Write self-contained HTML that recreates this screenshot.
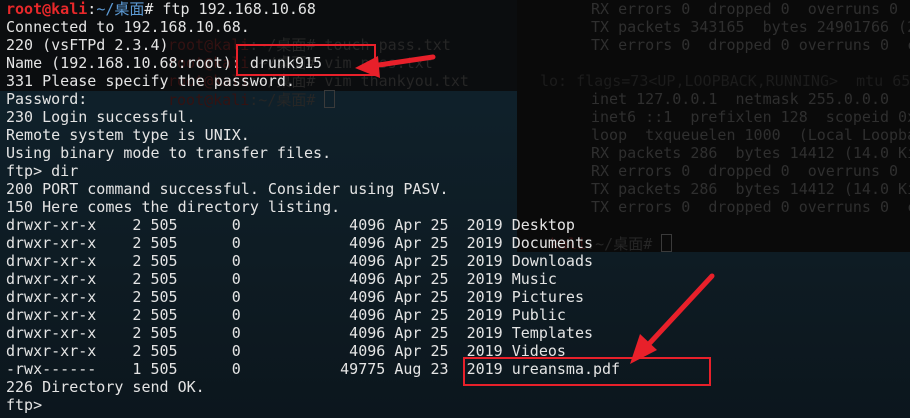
<!DOCTYPE html>
<html><head><meta charset="utf-8"><style>
body{margin:0;width:910px;height:418px;overflow:hidden;background:#0e1c25;position:relative;font-family:"DejaVu Sans Mono","Liberation Mono","Noto Sans CJK SC",monospace;font-size:15px;}
.bg{position:absolute;left:0;top:0;width:910px;height:418px;background:linear-gradient(180deg,#10232e 0%,#0e1c24 60%,#0c161d 100%);}
.b1{position:absolute;left:0;top:0;width:517px;height:91px;background:#0b0d0f;}
.b2{position:absolute;left:517px;top:0;width:393px;height:252px;background:#0a0a0a;}
pre{margin:0;font:inherit;line-height:18px;position:absolute;white-space:pre;overflow:hidden;}
.ghost{color:#2f2f2f;}
.g2{color:#262626;}
.main{left:6px;top:0;color:#e4e4e4;}
.r{color:#e8282a;font-weight:bold}
.bl{color:#5d9bd5}
.box{position:absolute;border:2px solid #e8202a;}
</style></head><body>
<div class="bg"></div><div class="b1"></div><div class="b2"></div>
<pre class="ghost" style="left:591px;top:0;width:319px">RX errors 0  dropped 0  overruns 0  frame 0
TX packets 343165  bytes 24901766 (23.7 MiB)
TX errors 0  dropped 0 overruns 0  carrier 0</pre>
<pre style="left:540px;top:72px;width:370px;color:#1c1c1c">lo: flags=73&lt;UP,LOOPBACK,RUNNING&gt;  mtu 65536</pre>
<pre class="ghost" style="left:591px;top:90px;width:319px">inet 127.0.0.1  netmask 255.0.0.0
inet6 ::1  prefixlen 128  scopeid 0x10&lt;host&gt;
loop  txqueuelen 1000  (Local Loopback)
RX packets 286  bytes 14412 (14.0 KiB)
RX errors 0  dropped 0  overruns 0  frame 0
TX packets 286  bytes 14412 (14.0 KiB)
TX errors 0  dropped 0 overruns 0  carrier 0</pre>
<pre class="g2" style="left:550px;top:234px;width:200px"><span style="color:#331212">kali</span>:~/桌面# <span style="display:inline-block;width:9px;height:16px;border:1px solid #3a3a3a;vertical-align:-3px"></span></pre>
<pre class="g2" style="left:168px;top:36px;width:300px"><span style="color:#331212">root@kali</span>:~/桌面# touch pass.txt
<span style="color:#331212">root@kali</span>:~/桌面# vim pass.txt
<span style="color:#331212">root@kali</span>:~/桌面# vim thankyou.txt
<span style="color:#331212">root@kali</span>:~/桌面# <span style="display:inline-block;width:9px;height:16px;border:1px solid #3a3a3a;vertical-align:-3px"></span></pre>
<pre class="main"><span class="r">root@kali</span>:<span class="bl">~/桌面</span># ftp 192.168.10.68
Connected to 192.168.10.68.
220 (vsFTPd 2.3.4)
Name (192.168.10.68:root): drunk915
331 Please specify the password.
Password:
230 Login successful.
Remote system type is UNIX.
Using binary mode to transfer files.
ftp> dir
200 PORT command successful. Consider using PASV.
150 Here comes the directory listing.
drwxr-xr-x    2 505      0            4096 Apr 25  2019 Desktop
drwxr-xr-x    2 505      0            4096 Apr 25  2019 Documents
drwxr-xr-x    2 505      0            4096 Apr 25  2019 Downloads
drwxr-xr-x    2 505      0            4096 Apr 25  2019 Music
drwxr-xr-x    2 505      0            4096 Apr 25  2019 Pictures
drwxr-xr-x    2 505      0            4096 Apr 25  2019 Public
drwxr-xr-x    2 505      0            4096 Apr 25  2019 Templates
drwxr-xr-x    2 505      0            4096 Apr 25  2019 Videos
-rwx------    1 505      0           49775 Aug 23  2019 ureansma.pdf
226 Directory send OK.
ftp&gt;</pre>
<div class="box" style="left:236px;top:44px;width:136px;height:28px"></div>
<div class="box" style="left:463px;top:357px;width:244px;height:25px"></div>
<svg width="910" height="418" style="position:absolute;left:0;top:0">
<line x1="433" y1="57" x2="372" y2="66" stroke="#e8202a" stroke-width="5" stroke-linecap="round"/>
<polygon points="355,68 378,56 380,78" fill="#e8202a"/>
<line x1="712" y1="276" x2="648" y2="345" stroke="#e8202a" stroke-width="5" stroke-linecap="round"/>
<polygon points="630,364 640,334 657,350" fill="#e8202a"/>
</svg>
</body></html>
